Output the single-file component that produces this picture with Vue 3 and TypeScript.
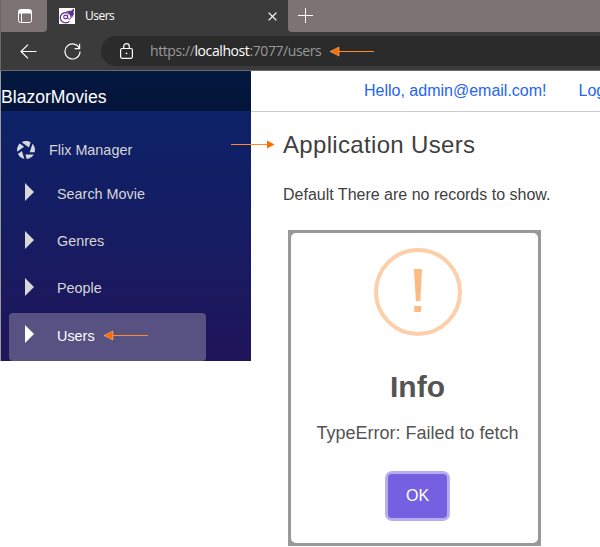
<script setup lang="ts">
import { ref } from 'vue'

interface NavItem {
  label: string
}

const items: NavItem[] = [
  { label: 'Search Movie' },
  { label: 'Genres' },
  { label: 'People' },
  { label: 'Users' },
]
const active = ref('Users')
</script>

<template>
  <div class="window">
    <header class="browser">
      <div class="tabs">
        <div class="tab-actions">
          <svg width="14" height="14" viewBox="0 0 14 14" fill="none" stroke="#fff">
            <rect x=".5" y=".5" width="13" height="13" rx="2" />
            <path d="M1 1h12v3.500H1z" fill="#fff" stroke="none" />
            <path d="M3.500 4v9.500" />
          </svg>
        </div>
        <div class="tab">
          <svg class="favicon" width="16" height="16" viewBox="0 0 16 16">
            <rect width="16" height="16" fill="#fff" />
            <path d="M6.500 3.200C9 3.300 10 3 11.500 2.200L11.200 3.400L15 .5C15.200 3 14.800 4 14.200 5.200L15.200 4.800C14.800 7 13.800 8 13 9.500L12.300 7.500L9.800 4.800Z" fill="#5c2d91" />
            <g fill="none" stroke="#5c2d91">
              <path d="M10.500 13.400A5.500 5.100 0 1 1 12.200 9" stroke-width="1.200" />
              <circle cx="6.600" cy="9" r="1.900" stroke-width="1.100" />
              <path d="M8.700 6.800v3.200q.2 1.500 1.800 1.200q1.700-.5 1.700-2.500" />
            </g>
          </svg>
          <span class="tab-title">Users</span>
          <svg class="tab-close" width="9" height="9" viewBox="0 0 9 9" stroke="#fff" stroke-width="1.300">
            <path d="M.6.6l7.800 7.800M8.400.6L.6 8.400" />
          </svg>
        </div>
        <div class="tab-new">
          <svg width="15" height="15" viewBox="0 0 15 15" stroke="#fff"><path d="M7.500 0v15M0 7.500h15" /></svg>
        </div>
      </div>
      <div class="toolbar">
        <svg class="back" width="17" height="15" viewBox="0 0 17 15" fill="none" stroke="#fff" stroke-width="1.200">
          <path d="M16.500 7.500H1M8 .6L1 7.500l7 6.900" />
        </svg>
        <svg class="reload" width="17" height="17" viewBox="0 0 17 17" fill="none" stroke="#fff" stroke-width="1.200">
          <path d="M15.400 5.500A7.500 7.500 0 1 0 16 8.500M15.600.8v4.900h-5" />
        </svg>
        <div class="address">
          <svg width="13" height="16" viewBox="0 0 13 16" fill="none" stroke="#fff" stroke-width="1.200">
            <rect x=".6" y="5.500" width="11.800" height="9.800" rx="1.500" />
            <path d="M3.700 5.500V3.400a2.800 2.800 0 0 1 5.600 0v2.100" />
            <circle cx="6.500" cy="10.300" r=".9" fill="#fff" stroke="none" />
          </svg>
          <span class="url">https://<b>localhost</b>:7077/users</span>
        </div>
      </div>
    </header>

    <div class="page">
      <nav class="sidebar">
        <div class="brand">BlazorMovies</div>
        <div class="menu">
          <div class="group">
            <svg width="18" height="18" viewBox="0 0 8 8" fill="#d7d7de">
              <path d="M4 0c-.69 0-1.340.19-1.910.5l3.220 2.340.75-2.250c-.6-.36-1.310-.59-2.060-.59zM1.250 1.130C.49 1.860 0 2.870 0 4.010c0 .25.02.48.06.72l3.090-2.220zM6.880 1.260L5.660 5.010h2.190c.08-.32.13-.65.13-1 0-1.070-.41-2.030-1.090-2.750zM2.160 4.480L.41 5.730c.55 1.130 1.600 1.990 2.880 2.220zM3.720 6.010l.63 1.970c1.330-.12 2.460-.88 3.090-1.970z" />
            </svg>
            <span>Flix Manager</span>
          </div>
          <a
            v-for="item in items"
            :key="item.label"
            class="item"
            :class="{ active: item.label === active }"
            @click="active = item.label"
          >
            <svg width="9" height="18" viewBox="0 0 9 18"><path d="M0 0l9 9-9 9z" fill="currentColor" /></svg>
            <span>{{ item.label }}</span>
          </a>
        </div>
      </nav>

      <main class="main">
        <div class="top-row">
          <a class="hello">Hello, admin@email.com!</a>
          <a>Log out</a>
        </div>
        <article class="content">
          <h1>Application Users</h1>
          <p>Default There are no records to show.</p>
          <section class="backdrop">
            <div class="dialog">
              <div class="icon">
                <svg width="88" height="88" viewBox="0 0 88 88">
                  <circle cx="44" cy="44" r="42" fill="none" stroke="#fdcfa9" stroke-width="4" />
                  <path d="M40 21h8l-1.700 32h-4.400zM40.200 58h7v6h-7z" fill="#fabb84" />
                </svg>
              </div>
              <h2>Info</h2>
              <div class="message">TypeError: Failed to fetch</div>
              <button type="button">OK</button>
            </div>
          </section>
        </article>
      </main>
    </div>

    <svg class="arrow arrow-url" width="45" height="11" viewBox="0 0 45 11">
      <path d="M8 5.500h36" stroke="#ff8a2c" /><path d="M0 5.500L9 1v9z" fill="#ff6a00" stroke="#ffd0a0" stroke-width=".5" />
    </svg>
    <svg class="arrow arrow-menu" width="45" height="11" viewBox="0 0 45 11">
      <path d="M8 5.500h36" stroke="#ff8a2c" /><path d="M0 5.500L9 1v9z" fill="#ff6a00" stroke="#ffd0a0" stroke-width=".5" />
    </svg>
    <svg class="arrow arrow-title" width="44" height="10" viewBox="0 0 44 10">
      <path d="M0 4.500h37" stroke="#ff8a2c" /><path d="M43.500 4.500L36 .6v7.800z" fill="#ff6a00" />
    </svg>
  </div>
</template>

<style>
body {
  margin: 0;
  background: #fff;
  overflow: hidden;
}
</style>

<style scoped>
.window {
  position: relative;
  box-sizing: border-box;
  width: 600px;
  height: 547px;
  overflow: hidden;
  font-family: "Liberation Sans", Arial, sans-serif;
  color: #404040;
}
.browser {
  box-sizing: border-box;
  height: 71px;
  background: #3b3b3b;
  border-bottom: 1px solid #6a6a6a;
  border-left: 1px solid #686868;
}
.tabs {
  display: flex;
  height: 32px;
  background: #3b3b3b;
}
.tab-actions {
  box-sizing: border-box;
  width: 46px;
  padding: 9px 0 0 17px;
  background: #7b7473;
  border-bottom-right-radius: 4px;
}
.tab {
  box-sizing: border-box;
  display: flex;
  align-items: center;
  width: 241px;
  padding: 0 11px 0 12px;
}
.tab-title {
  margin-left: 10px;
  color: #fff;
  font: 12px/16px "Open Sans", "Noto Sans", sans-serif;
  letter-spacing: -0.5px;
}
.tab-close {
  margin-left: auto;
}
.tab-new {
  box-sizing: border-box;
  flex: 1;
  padding: 8px 0 0 10px;
  background: #7b7473;
  border-bottom-left-radius: 4px;
}
.tab-actions svg,
.tab-new svg {
  display: block;
}
.toolbar {
  display: flex;
  align-items: center;
  height: 38px;
  padding-left: 19px;
}
.reload {
  margin-left: 27px;
}
.address {
  box-sizing: border-box;
  display: flex;
  flex: 1;
  align-items: center;
  height: 30px;
  margin-left: 20px;
  padding-left: 19px;
  background: #2b2b2b;
  border-radius: 15px 0 0 15px;
}
.url {
  margin-left: 17px;
  color: #999;
  font: 14px/20px "Open Sans", "Noto Sans", sans-serif;
  letter-spacing: -0.41px;
  white-space: nowrap;
}
.url b {
  color: #fff;
  font-weight: 400;
}
.page {
  display: flex;
  align-items: flex-start;
  height: 476px;
}
.sidebar {
  box-sizing: border-box;
  flex: none;
  width: 251px;
  height: 290px;
  border-left: 1px solid #999;
  background: linear-gradient(180deg, #05276b 0%, #0d2268 15%, #20155b 100%);
}
.brand {
  box-sizing: border-box;
  height: 40px;
  padding-top: 16px;
  background: linear-gradient(#04183f, #05143b);
  color: #fff;
  font-size: 17.6px;
  line-height: 20px;
}
.menu {
  padding: 30px 45px 0 8px;
  color: #d7d7d7;
  font-size: 14.4px;
}
.group {
  display: flex;
  align-items: center;
  gap: 14px;
  height: 18px;
  padding-left: 8px;
  margin-bottom: 12px;
}
.item {
  display: flex;
  align-items: center;
  gap: 23px;
  box-sizing: border-box;
  height: 47.400px;
  padding-left: 16px;
  border-radius: 4px;
}
.item svg {
  margin-top: -5px;
}
.item span {
  margin-top: -2px;
}
.item.active {
  color: #fff;
  background: #585283;
}
.main {
  flex: 1;
  min-width: 0;
}
.top-row {
  box-sizing: border-box;
  display: flex;
  gap: 32px;
  height: 41px;
  padding-left: 113px;
  border-bottom: 1px solid #ccc;
  color: #2563f6;
  font-size: 16px;
  line-height: 39px;
  white-space: nowrap;
}
.content {
  padding: 18px 0 0 32px;
}
h1 {
  margin: 0;
  font-size: 24px;
  font-weight: 400;
  line-height: 30px;
  letter-spacing: 0.33px;
}
p {
  margin: 23px 0 0;
  font-size: 16px;
  line-height: 24px;
}
.backdrop {
  box-sizing: border-box;
  width: 253px;
  height: 316px;
  margin: 23px 0 0 5px;
  padding: 3px;
  background: #999;
}
.dialog {
  display: flex;
  flex-direction: column;
  align-items: center;
  box-sizing: border-box;
  height: 310px;
  padding: 15px 0 0 6px;
  border-radius: 5px;
  background: #fff;
  color: #545454;
}
.icon {
  height: 88px;
}
h2 {
  margin: 33px 0 0;
  font-size: 30px;
  font-weight: 700;
  line-height: 36px;
}
.message {
  margin-top: 18px;
  font-size: 18px;
  line-height: 20px;
  white-space: nowrap;
}
button {
  width: 59px;
  height: 44px;
  margin-top: 31px;
  padding: 0;
  border: 0;
  border-radius: 4px;
  background: #7460e0;
  box-shadow: 0 0 0 3px #b8adee;
  color: #fff;
  font: 16px "Liberation Sans", Arial, sans-serif;
}
.arrow {
  position: absolute;
}
.arrow-url {
  left: 330px;
  top: 46px;
}
.arrow-menu {
  left: 104px;
  top: 330px;
}
.arrow-title {
  left: 231px;
  top: 140px;
}
</style>
